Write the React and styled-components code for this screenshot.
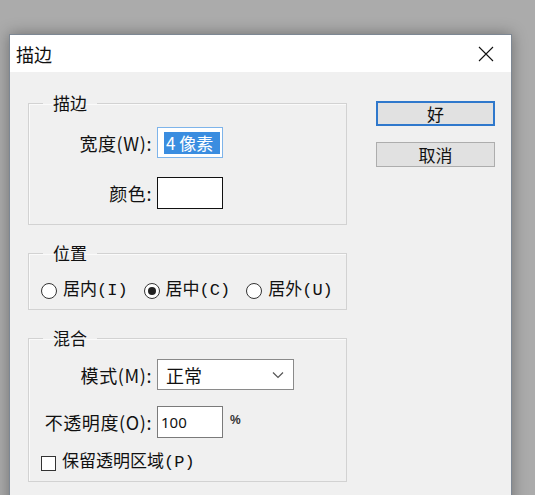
import styled, { createGlobalStyle } from "styled-components";

const GlobalStyle = createGlobalStyle`
  html, body {
    margin: 0;
    padding: 0;
    height: 100%;
    overflow: hidden;
    background: #ababab;
  }
  body {
    font-family: "Noto Sans CJK SC", "Noto Sans", sans-serif;
    color: #111;
  }
`;

const Screen = styled.div`
  padding: 34px 0 0 9px;
`;

const Dialog = styled.div`
  width: 503px;
  box-sizing: border-box;
  border: 1px solid #7d8793;
  border-bottom: none;
  background: #f0f0f0;
  box-shadow: 0 0 14px rgba(0, 0, 0, 0.35);
`;

const TitleBar = styled.div`
  height: 37px;
  display: flex;
  align-items: center;
  justify-content: space-between;
  padding: 0 17px 0 6px;
  background: #fff;
  font-size: 18px;
  line-height: 22px;
`;

const Body = styled.div`
  display: flex;
  align-items: flex-start;
  padding: 21px 16px 20px 18px;
  height: 460px;
`;

const Groups = styled.div`
  display: flex;
  flex-direction: column;
  gap: 18px;
  width: 319px;
`;

const Group = styled.fieldset`
  margin: 0;
  padding: 0 0 ${(p) => p.$bottom}px 0;
  border: 1px solid #d2d2d2;
  box-shadow: inset 1px 1px 0 #fafafa;
  min-width: 0;
`;

const Legend = styled.legend`
  margin-left: 14px;
  padding: 0 10px;
  font-size: 17px;
  line-height: 20px;
`;

const Rows = styled.div`
  display: flex;
  flex-direction: column;
  gap: ${(p) => p.$gap}px;
  margin-top: ${(p) => p.$top}px;
`;

const Row = styled.div`
  display: flex;
  align-items: center;
`;

const Label = styled.span`
  width: 123px;
  margin-right: 5px;
  text-align: right;
  font-size: 18px;
  letter-spacing: 0.6px;
  line-height: 20px;
  white-space: nowrap;
`;

const Box = styled.div`
  box-sizing: border-box;
  width: ${(p) => p.$w}px;
  height: ${(p) => p.$h}px;
  border: 1px solid ${(p) => p.$border};
  background: #fff;
  display: flex;
  align-items: center;
`;

const Selected = styled.span`
  margin: 0 2px 0 6px;
  padding: 0 2px;
  height: 22px;
  flex: 1;
  background: #3a8de0;
  color: #fff;
  font-size: 17px;
  line-height: 22px;
  white-space: nowrap;
`;

const BoxText = styled.span`
  flex: 1;
  padding-left: ${(p) => p.$pad}px;
  font-family: ${(p) => (p.$latin ? '"Noto Sans", sans-serif' : "inherit")};
  font-size: ${(p) => (p.$latin ? 15 : 18)}px;
  line-height: 20px;
`;

const Percent = styled.span`
  align-self: flex-start;
  margin: 7px 0 0 7px;
  font-family: "Liberation Sans", sans-serif;
  font-size: 12px;
  font-weight: bold;
  color: #333;
`;

const OptionRow = styled.div`
  display: flex;
  align-items: center;
  gap: 16px;
  height: 20px;
  padding-left: 12px;
  margin-top: ${(p) => p.$top}px;
`;

const Option = styled.label`
  display: flex;
  align-items: center;
  gap: 6px;
  font-family: "Liberation Mono", "Noto Sans CJK SC", monospace;
  font-size: 17px;
  line-height: 20px;
  white-space: nowrap;
`;

const Radio = styled.span`
  box-sizing: border-box;
  width: 16px;
  height: 16px;
  border-radius: 50%;
  border: 1px solid #333;
  background: #fff;
  display: flex;
  align-items: center;
  justify-content: center;
  &::after {
    content: "";
    width: 8px;
    height: 8px;
    border-radius: 50%;
    background: ${(p) => (p.$on ? "#222" : "transparent")};
  }
`;

const Check = styled.span`
  box-sizing: border-box;
  width: 15px;
  height: 15px;
  border: 1px solid #333;
  background: #fff;
`;

const Buttons = styled.div`
  display: flex;
  flex-direction: column;
  gap: 16px;
  width: 119px;
  margin: 8px 0 0 29px;
`;

const Button = styled.button`
  box-sizing: border-box;
  width: 119px;
  height: 25px;
  padding: 0;
  background: #e1e1e1;
  border: ${(p) => (p.$primary ? "2px solid #2f78cc" : "1px solid #adadad")};
  font-family: inherit;
  font-size: 17px;
  line-height: 20px;
  color: #111;
`;

const Chevron = () => (
  <svg width="12" height="8" viewBox="0 0 12 8" style={{ marginRight: 9 }}>
    <path d="M1 1.5 L6 6.5 L11 1.5" fill="none" stroke="#555" strokeWidth="1.2" />
  </svg>
);

const CloseIcon = () => (
  <svg width="16" height="16" viewBox="0 0 16 16">
    <path d="M1 1 L15 15 M15 1 L1 15" stroke="#111" strokeWidth="1.1" />
  </svg>
);

export default function App() {
  return (
    <>
      <GlobalStyle />
      <Screen>
        <Dialog>
          <TitleBar>
            <span>描边</span>
            <CloseIcon />
          </TitleBar>
          <Body>
            <Groups>
              <Group $bottom={15}>
                <Legend>描边</Legend>
                <Rows $gap={19} $top={14}>
                  <Row>
                    <Label>宽度(W):</Label>
                    <Box $w={66} $h={31} $border="#7eb4ea">
                      <Selected>4 像素</Selected>
                    </Box>
                  </Row>
                  <Row>
                    <Label>颜色:</Label>
                    <Box $w={66} $h={32} $border="#111" />
                  </Row>
                </Rows>
              </Group>

              <Group $bottom={8}>
                <Legend>位置</Legend>
                <OptionRow $top={18}>
                  <Option>
                    <Radio />
                    居内(I)
                  </Option>
                  <Option>
                    <Radio $on />
                    居中(C)
                  </Option>
                  <Option>
                    <Radio />
                    居外(U)
                  </Option>
                </OptionRow>
              </Group>

              <Group $bottom={8}>
                <Legend>混合</Legend>
                <Rows $gap={16} $top={11}>
                  <Row>
                    <Label>模式(M):</Label>
                    <Box $w={137} $h={31} $border="#8a8a8a">
                      <BoxText $pad={8}>正常</BoxText>
                      <Chevron />
                    </Box>
                  </Row>
                  <Row>
                    <Label>不透明度(O):</Label>
                    <Box $w={66} $h={32} $border="#7a7a7a">
                      <BoxText $pad={3} $latin>
                        100
                      </BoxText>
                    </Box>
                    <Percent>%</Percent>
                  </Row>
                </Rows>
                <OptionRow $top={15}>
                  <Option>
                    <Check />
                    保留透明区域(P)
                  </Option>
                </OptionRow>
              </Group>
            </Groups>
            <Buttons>
              <Button $primary>好</Button>
              <Button>取消</Button>
            </Buttons>
          </Body>
        </Dialog>
      </Screen>
    </>
  );
}
